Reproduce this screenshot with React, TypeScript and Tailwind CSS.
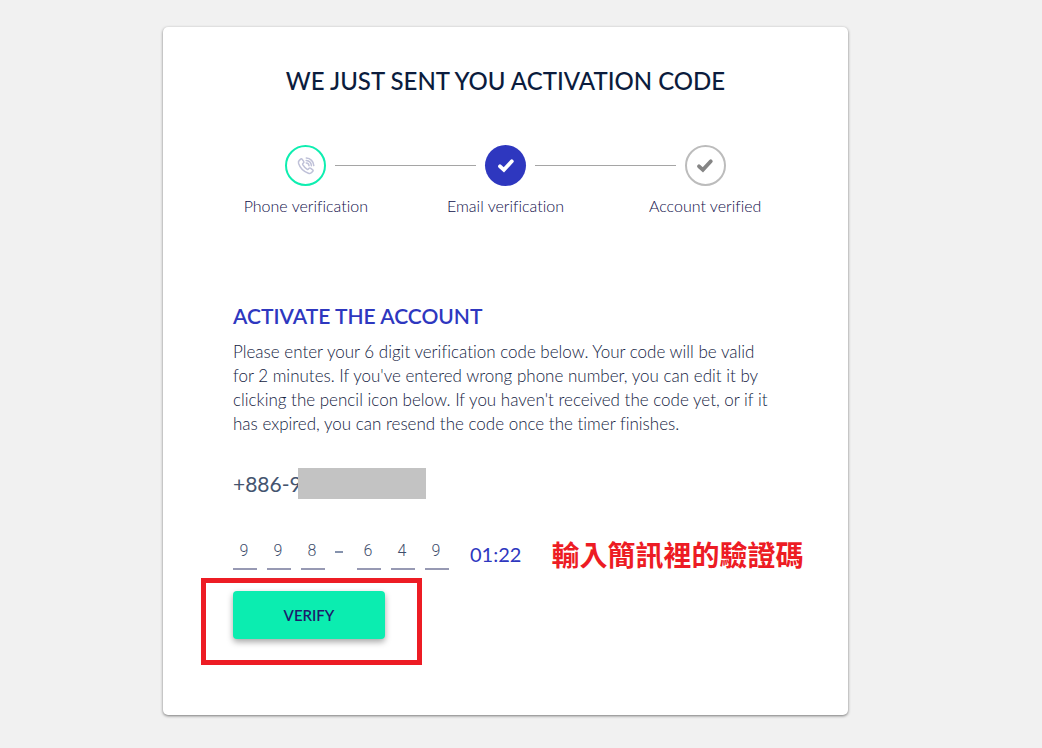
import React from "react";

type StepProps = {
  label: string;
  circleClass: string;
  icon: React.ReactNode;
  first?: boolean;
  last?: boolean;
};

const PhoneIcon = () => (
  <svg viewBox="0 0 18 18" className="size-[18px]" fill="none" stroke="#bfc1d8" strokeWidth="1.5" strokeLinecap="round" strokeLinejoin="round" aria-hidden="true">
    <path d="M2.1 3.6 3.6 2.1c.5-.5 1.1-.4 1.5.1l1.6 2.2c.4.5.3 1-.1 1.4l-.9.9c-.3.3-.2.6 0 1 1 1.8 2.7 3.4 4.6 4.6.3.2.7.2.9-.1l.9-.9c.4-.4.9-.5 1.4-.1l2.2 1.6c.5.4.6 1 .1 1.5l-1.2 1.3c-.8.9-2 1-3.2.6C7 14.7 3.1 11 1.6 6.5c-.3-1.1-.2-2.2.5-2.9Z" />
    <path d="M9.3 1.1c4.2.2 7.3 3.3 7.5 7.5M9.2 3.5c3 .2 5 2.2 5.2 5.2M9.2 5.9c1.7.1 2.7 1.1 2.8 2.8" />
  </svg>
);

const CheckIcon = () => (
  <svg viewBox="0 0 18 16" className="h-4 w-[18px]" fill="none" stroke="currentColor" strokeWidth="3.8" aria-hidden="true">
    <path d="M3 8.3 6.9 11.9 14.8 3.3" strokeLinecap="round" strokeLinejoin="miter" />
  </svg>
);

const Step: React.FC<StepProps> = ({ label, circleClass, icon, first, last }) => (
  <li className="flex flex-col items-center">
    <div className="flex w-full items-center gap-[9px]">
      <span className={first ? "h-px flex-1" : "h-px flex-1 bg-[#a5a5a5]"} />
      <span className={`flex size-[41px] items-center justify-center rounded-full ${circleClass}`}>
        {icon}
      </span>
      <span className={last ? "h-px flex-1" : "h-px flex-1 bg-[#a5a5a5]"} />
    </div>
    <span className="mt-2 text-base leading-6 font-light text-[#0f0f4a]">{label}</span>
  </li>
);

const DigitInput = ({ digit, position }: { digit: string; position: number }) => (
  <input
    type="text"
    inputMode="numeric"
    maxLength={1}
    defaultValue={digit}
    aria-label={`Digit ${position}`}
    className="h-10 w-6 border-b-2 border-[#9799b3] pt-[2px] pr-[2px] text-center font-['Roboto',sans-serif] text-base font-light text-[#3d4d6b] outline-none"
  />
);

const App: React.FC = () => {
  return (
    <div className="min-h-screen bg-[#f1f1f1] pt-[27px] pr-[194px] pb-8 pl-[163px] font-['Lato',sans-serif] [font-variant-ligatures:no-common-ligatures]">
      <main className="rounded-[5px] bg-white pt-9 pb-[50px] shadow-[0_1px_3px_rgba(0,0,0,0.5)]">
        <h1 className="text-center text-2xl leading-9 font-medium text-[#0b1c3d]">
          WE JUST SENT YOU ACTIVATION CODE
        </h1>

        {/* Progress */}
        <ol className="mx-[43px] mt-[46px] grid grid-cols-3">
          <Step first label="Phone verification" circleClass="border-2 border-[#0eeeb0]" icon={<PhoneIcon />} />
          <Step label="Email verification" circleClass="bg-[#2e37bf] text-white" icon={<CheckIcon />} />
          <Step last label="Account verified" circleClass="border-2 border-[#bcbcbc] text-[#858585]" icon={<CheckIcon />} />
        </ol>

        <form className="mx-[70px] mt-[82px]" onSubmit={(e) => e.preventDefault()}>
          <h2 className="text-[21px] leading-8 font-semibold text-[#2e37bf]">ACTIVATE THE ACCOUNT</h2>
          <p className="mt-2 text-[17px] leading-6 font-light text-[#14233f]">
            Please enter your 6 digit verification code below. Your code will be valid
            for 2 minutes. If you've entered wrong phone number, you can edit it by
            clicking the pencil icon below. If you haven't received the code yet, or if it
            has expired, you can resend the code once the timer finishes.
          </p>

          {/* Phone number, masked after the first digit */}
          <div className="relative mt-8 w-fit text-[21px] leading-[31px] text-[#44546f]">
            +886-9
            <span className="absolute inset-y-0 left-[65px] w-32 bg-[#c3c3c3]" />
          </div>

          {/* Code, timer and note */}
          <div className="mt-[31px] flex items-center">
            <div className="flex items-center gap-[10px]">
              <DigitInput digit="9" position={1} />
              <DigitInput digit="9" position={2} />
              <DigitInput digit="8" position={3} />
              <span className="mt-1 mr-1 h-[2px] w-2 bg-[#8592ad]" />
              <DigitInput digit="6" position={4} />
              <DigitInput digit="4" position={5} />
              <DigitInput digit="9" position={6} />
            </div>
            <span className="ml-[21px] pt-2 text-[20px] leading-8 text-[#2e37bf]">01:22</span>
            <span className="ml-[30px] pt-2 font-['Noto_Sans_CJK_TC',sans-serif] text-[28px] leading-8 font-bold whitespace-nowrap text-[#ed1c24]">
              輸入簡訊裡的驗證碼
            </span>
          </div>

          <div className="mt-2 -ml-8 w-[221px] border-5 border-[#ed1c24] pt-2 pb-[21px] pl-[27px]">
            <button
              type="submit"
              className="block h-12 w-38 rounded bg-[#0bedb0] text-[15px] font-semibold text-[#1c1c6b] shadow-[0_3px_6px_rgba(0,0,0,0.35)]"
            >
              VERIFY
            </button>
          </div>
        </form>
      </main>
    </div>
  );
};

export default App;
